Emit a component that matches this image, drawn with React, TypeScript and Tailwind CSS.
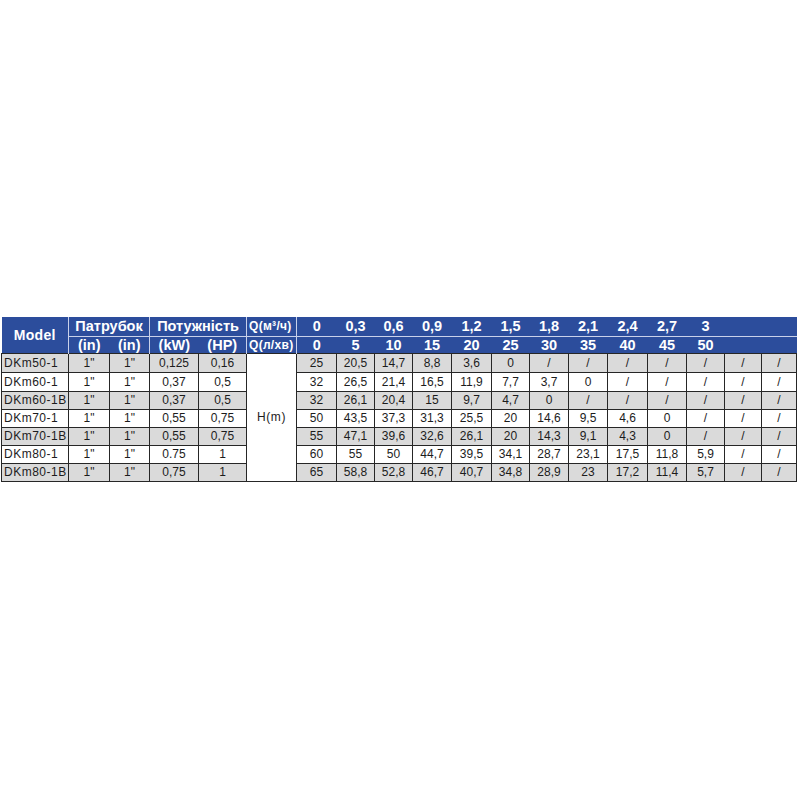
import React from 'react';

const flows = ['0', '0,3', '0,6', '0,9', '1,2', '1,5', '1,8', '2,1', '2,4', '2,7', '3', '', ''];
const litres = ['0', '5', '10', '15', '20', '25', '30', '35', '40', '45', '50', '', ''];

const rows = [
  { model: 'DKm50-1', a: '1"', b: '1"', kw: '0,125', hp: '0,16', h: ['25', '20,5', '14,7', '8,8', '3,6', '0', '/', '/', '/', '/', '/', '/', '/'] },
  { model: 'DKm60-1', a: '1"', b: '1"', kw: '0,37', hp: '0,5', h: ['32', '26,5', '21,4', '16,5', '11,9', '7,7', '3,7', '0', '/', '/', '/', '/', '/'] },
  { model: 'DKm60-1B', a: '1"', b: '1"', kw: '0,37', hp: '0,5', h: ['32', '26,1', '20,4', '15', '9,7', '4,7', '0', '/', '/', '/', '/', '/', '/'] },
  { model: 'DKm70-1', a: '1"', b: '1"', kw: '0,55', hp: '0,75', h: ['50', '43,5', '37,3', '31,3', '25,5', '20', '14,6', '9,5', '4,6', '0', '/', '/', '/'] },
  { model: 'DKm70-1B', a: '1"', b: '1"', kw: '0,55', hp: '0,75', h: ['55', '47,1', '39,6', '32,6', '26,1', '20', '14,3', '9,1', '4,3', '0', '/', '/', '/'] },
  { model: 'DKm80-1', a: '1"', b: '1"', kw: '0.75', hp: '1', h: ['60', '55', '50', '44,7', '39,5', '34,1', '28,7', '23,1', '17,5', '11,8', '5,9', '/', '/'] },
  { model: 'DKm80-1B', a: '1"', b: '1"', kw: '0,75', hp: '1', h: ['65', '58,8', '52,8', '46,7', '40,7', '34,8', '28,9', '23', '17,2', '11,4', '5,7', '/', '/'] },
];

const dataWidths = [40, 38, 38, 39, 40, 38, 39, 39, 40, 39, 38, 37, 35];

const cell = 'border border-[#262626] text-center p-0';

export default function App() {
  return (
    <div className="w-[800px] h-[800px] bg-white pt-[317px] pl-px font-['Liberation_Sans',Arial,sans-serif]">
      <table className="table-fixed border-collapse w-[795px] text-[12px] leading-[14px] text-[#1c1c1c]">
        <colgroup>
          <col className="w-[67px]" />
          <col className="w-[41px]" />
          <col className="w-[40px]" />
          <col className="w-[49px]" />
          <col className="w-[48px]" />
          <col className="w-[50px]" />
          {dataWidths.map((w, i) => (
            <col key={i} style={{ width: w }} />
          ))}
        </colgroup>
        <thead className="bg-[#2c4d9c] text-white font-bold text-[14.5px] leading-[16px]">
          <tr className="h-[19px]">
            <th rowSpan={2} className="text-[14px] border-r border-[#c9d1ea] p-0 tracking-[0.3px]">
              Model
            </th>
            <th colSpan={2} className="border-r border-b border-[#c9d1ea] p-0">
              Патрубок
            </th>
            <th colSpan={2} className="border-r border-b border-[#c9d1ea] p-0">
              Потужність
            </th>
            <th className="text-[12px] tracking-[0.3px] text-left pl-[2px] border-r border-b border-[#c9d1ea] p-0 whitespace-nowrap">
              Q(м³/ч)
            </th>
            {flows.map((f, i) => (
              <th key={i} className="border-b border-[#c9d1ea] p-0">
                {f}
              </th>
            ))}
          </tr>
          <tr className="h-[17px]">
            <th className="p-0">(in)</th>
            <th className="border-r border-[#c9d1ea] p-0">(in)</th>
            <th className="p-0">(kW)</th>
            <th className="border-r border-[#c9d1ea] p-0">(HP)</th>
            <th className="text-[12px] tracking-[0.3px] text-left pl-[2px] border-r border-[#c9d1ea] p-0 whitespace-nowrap">
              Q(л/хв)
            </th>
            {litres.map((l, i) => (
              <th key={i} className="p-0">
                {l}
              </th>
            ))}
          </tr>
        </thead>
        <tbody>
          {rows.map((r, ri) => {
            const bg = ri % 2 === 0 ? 'bg-[#dadada]' : 'bg-white';
            return (
              <tr key={r.model} className={ri < 2 ? 'h-[19px]' : 'h-[18px]'}>
                <td className={`${bg} border border-[#262626] text-left pl-[2px] p-0 tracking-[0.5px] whitespace-nowrap`}>
                  {r.model}
                </td>
                <td className={`${bg} ${cell}`}>{r.a}</td>
                <td className={`${bg} ${cell}`}>{r.b}</td>
                <td className={`${bg} ${cell}`}>{r.kw}</td>
                <td className={`${bg} ${cell}`}>{r.hp}</td>
                {ri === 0 && (
                  <td rowSpan={7} className={`bg-white ${cell} tracking-[0.6px]`}>
                    H(m)
                  </td>
                )}
                {r.h.map((v, i) => (
                  <td key={i} className={`${bg} ${cell}`}>
                    {v}
                  </td>
                ))}
              </tr>
            );
          })}
        </tbody>
      </table>
    </div>
  );
}
